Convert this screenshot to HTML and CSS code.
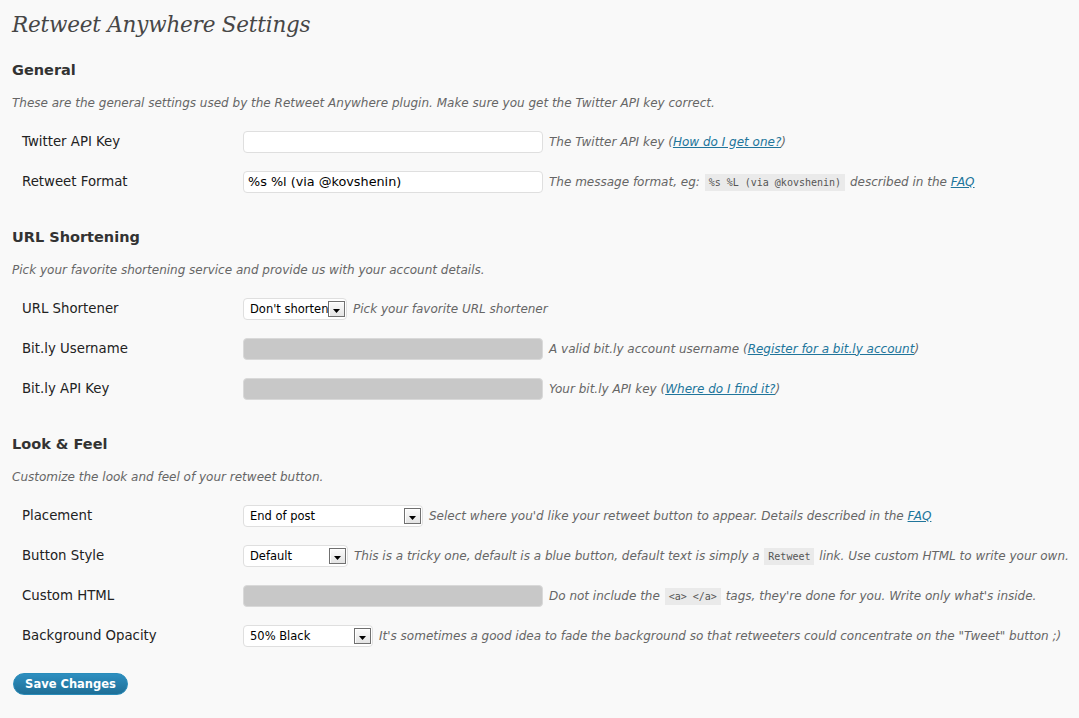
FILE: index.html
```html
<!DOCTYPE html>
<html>
<head>
<meta charset="utf-8">
<title>Retweet Anywhere Settings</title>
<link rel="stylesheet" href="styles.css">
</head>
<body>
<div class="wrap">
  <h2 class="page-title">Retweet Anywhere Settings</h2>

  <h3 class="section-title">General</h3>
  <p class="section-desc">These are the general settings used by the Retweet Anywhere plugin. Make sure you get the Twitter API key correct.</p>
  <div class="form-table">
    <div class="row">
      <div class="label">Twitter API Key</div>
      <div class="field">
        <span class="input"></span>
        <span class="desc">The Twitter API key (<a href="#">How do I get one?</a>)</span>
      </div>
    </div>
    <div class="row">
      <div class="label">Retweet Format</div>
      <div class="field">
        <span class="input">%s %l (via @kovshenin)</span>
        <span class="desc">The message format, eg: <code>%s %L (via @kovshenin)</code> described in the <a href="#">FAQ</a></span>
      </div>
    </div>
  </div>

  <h3 class="section-title">URL Shortening</h3>
  <p class="section-desc">Pick your favorite shortening service and provide us with your account details.</p>
  <div class="form-table">
    <div class="row">
      <div class="label">URL Shortener</div>
      <div class="field">
        <span class="select w-short"><span class="sel-text">Don't shorten</span><span class="arrow"><svg width="7" height="4" viewBox="0 0 7 4"><path d="M0 0H7L3.5 4Z" fill="#000"/></svg></span></span>
        <span class="desc">Pick your favorite URL shortener</span>
      </div>
    </div>
    <div class="row">
      <div class="label">Bit.ly Username</div>
      <div class="field">
        <span class="input disabled"></span>
        <span class="desc">A valid bit.ly account username (<a href="#">Register for a bit.ly account</a>)</span>
      </div>
    </div>
    <div class="row">
      <div class="label">Bit.ly API Key</div>
      <div class="field">
        <span class="input disabled"></span>
        <span class="desc">Your bit.ly API key (<a href="#">Where do I find it?</a>)</span>
      </div>
    </div>
  </div>

  <h3 class="section-title">Look &amp; Feel</h3>
  <p class="section-desc">Customize the look and feel of your retweet button.</p>
  <div class="form-table">
    <div class="row">
      <div class="label">Placement</div>
      <div class="field">
        <span class="select w-place"><span class="sel-text">End of post</span><span class="arrow"><svg width="7" height="4" viewBox="0 0 7 4"><path d="M0 0H7L3.5 4Z" fill="#000"/></svg></span></span>
        <span class="desc">Select where you'd like your retweet button to appear. Details described in the <a href="#">FAQ</a></span>
      </div>
    </div>
    <div class="row">
      <div class="label">Button Style</div>
      <div class="field">
        <span class="select w-style"><span class="sel-text">Default</span><span class="arrow"><svg width="7" height="4" viewBox="0 0 7 4"><path d="M0 0H7L3.5 4Z" fill="#000"/></svg></span></span>
        <span class="desc">This is a tricky one, default is a blue button, default text is simply a <code>Retweet</code> link. Use custom HTML to write your own.</span>
      </div>
    </div>
    <div class="row">
      <div class="label">Custom HTML</div>
      <div class="field">
        <span class="input disabled"></span>
        <span class="desc">Do not include the <code>&lt;a&gt; &lt;/a&gt;</code> tags, they're done for you. Write only what's inside.</span>
      </div>
    </div>
    <div class="row">
      <div class="label">Background Opacity</div>
      <div class="field">
        <span class="select w-opacity"><span class="sel-text">50% Black</span><span class="arrow"><svg width="7" height="4" viewBox="0 0 7 4"><path d="M0 0H7L3.5 4Z" fill="#000"/></svg></span></span>
        <span class="desc">It's sometimes a good idea to fade the background so that retweeters could concentrate on the "Tweet" button ;)</span>
      </div>
    </div>
  </div>

  <div class="submit">
    <button class="button-primary" type="button">Save Changes</button>
  </div>
</div>
</body>
</html>
```
FILE: styles.css
```css
html, body {
  margin: 0;
  padding: 0;
  background: #f9f9f9;
}
body {
  font-family: "DejaVu Sans", Verdana, sans-serif;
  font-size: 13px;
  color: #333;
}
.wrap {
  padding: 0 12px;
}
.page-title {
  margin: 0;
  padding-top: 10px;
  height: 30px;
  line-height: 30px;
  font-family: "DejaVu Serif", Georgia, serif;
  font-style: italic;
  font-weight: normal;
  font-size: 21.5px;
  color: #464646;
  letter-spacing: -0.2px;
}
.section-title {
  margin: 20px 0 0;
  height: 20px;
  line-height: 20px;
  font-size: 14.5px;
  font-weight: bold;
  color: #333;
}
.form-table + .section-title {
  margin-top: 26px;
}
.section-desc {
  margin: 15px 0 0;
  height: 16px;
  line-height: 16px;
  font-size: 12px;
  font-style: italic;
  color: #666;
}
.form-table {
  margin-top: 10px;
}
.row {
  display: flex;
  align-items: center;
  height: 40px;
}
.label {
  flex: none;
  width: 221px;
  padding-left: 10px;
  font-size: 13.3px;
  color: #222;
}
.field {
  display: flex;
  align-items: center;
  gap: 6px;
  white-space: nowrap;
  padding-top: 1px;
}
.input {
  flex: none;
  box-sizing: border-box;
  width: 300px;
  height: 22px;
  border: 1px solid #dfdfdf;
  border-radius: 4px;
  background: #fff;
  padding: 0 4px;
  line-height: 20px;
  font-size: 12.8px;
  color: #000;
}
.input.disabled {
  background: #c8c8c8;
  border-color: #d9d9d9;
}
.select {
  flex: none;
  box-sizing: border-box;
  display: flex;
  align-items: center;
  justify-content: space-between;
  height: 22px;
  border: 1px solid #dfdfdf;
  border-radius: 4px;
  background: #fff;
  padding: 0 1px 0 6px;
  font-size: 11.5px;
  color: #000;
}
.w-short { width: 104px; }
.w-place { width: 180px; }
.w-style { width: 105px; }
.w-opacity { width: 130px; }
.sel-text {
  line-height: 20px;
  white-space: nowrap;
}
.arrow {
  box-sizing: border-box;
  flex: none;
  width: 17px;
  height: 16px;
  border: 1px solid #707070;
  background: linear-gradient(#fbfbfb, #e4e4e4);
  box-shadow: inset 1px 1px 0 #fff;
  display: flex;
  align-items: flex-end;
  justify-content: center;
  padding-bottom: 3px;
}
.arrow svg {
  display: block;
}
.desc {
  font-size: 12px;
  font-style: italic;
  color: #666;
}
.desc a {
  color: #21759b;
  text-decoration: underline;
}
code {
  font-family: "DejaVu Sans Mono", "Liberation Mono", monospace;
  font-size: 10px;
  font-style: normal;
  background: #eaeaea;
  color: #555;
  padding: 3px 4px;
  margin: 0 1px;
}
.submit {
  margin-top: 18px;
  padding-left: 1px;
}
.button-primary {
  box-sizing: border-box;
  height: 22px;
  width: 115px;
  border: 1px solid #298cba;
  border-radius: 11px;
  background: linear-gradient(#2e8fc0, #1f6f97);
  color: #fff;
  font-family: "DejaVu Sans", Verdana, sans-serif;
  font-size: 11.5px;
  font-weight: bold;
  padding: 0;
  cursor: pointer;
}
```
